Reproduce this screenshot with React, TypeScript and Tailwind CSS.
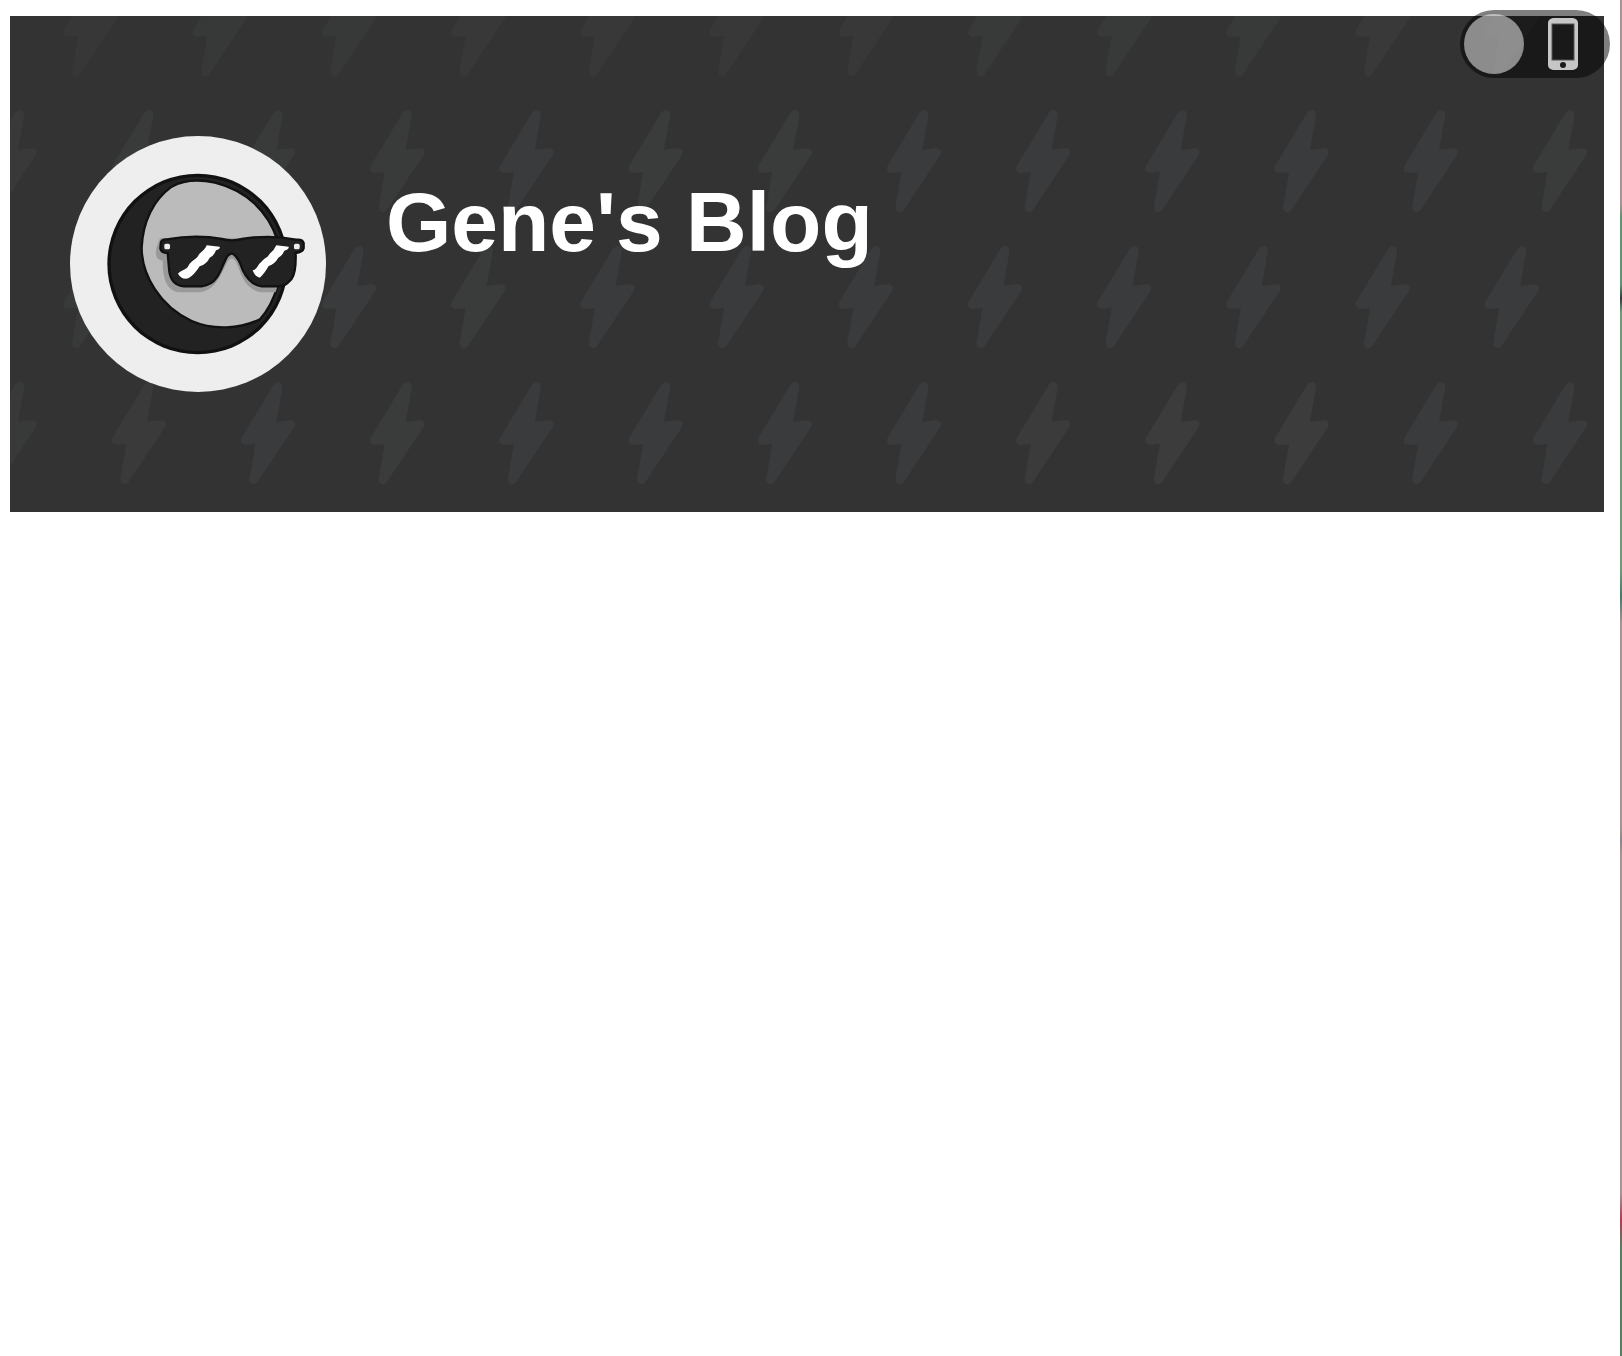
import React from "react";

const boltPath =
  "M33 3 Q35 0 38 0 Q43 1 42 6 L36 40 L50 38 Q57 39 54 45 L18 99 Q16 103 12 102 Q9 101 9 97 L15 62 L5 63 Q-1 62 1 56 Z";

const rows = [
  { y: -42, x: 53 },
  { y: 94, x: -28 },
  { y: 230, x: 53 },
  { y: 366, x: -28 },
];

const rowFills = [
  ["#373737", "#363938", "#363938", "#383838", "#383838", "#383838", "#383838", "#383a39", "#383a39", "#383a3a", "#383938", "#383838"],
  ["#393939", "#383b39", "#383b3a", "#393a3a", "#3a3b3d", "#3a3c3b", "#3a3c3c", "#3a3b3d", "#3a3b3d", "#3a3b3d", "#3a3b3d", "#3a3b3d", "#3a3c3c"],
  ["#373a39", "#393a3b", "#3a3b3d", "#3a3c3b", "#3a3b3d", "#3a3b3d", "#3a3b3d", "#3a3b3d", "#3a3b3d", "#3a3b3d", "#3a3b3d", "#3a3b3d"],
  ["#383a3a", "#3a3a3a", "#3a3b3d", "#3a3c3b", "#3a3b3d", "#3a3b3d", "#3a3b3d", "#3a3b3d", "#3b3b3c", "#3c3c3c", "#3c3c3c", "#3a3b3d", "#3a3b3d"],
];

function BoltPattern() {
  return (
    <svg aria-hidden="true" className="absolute inset-0 h-full w-full">
      {rows.map((row, r) =>
        rowFills[r].map((fill, i) => (
          <path key={`${r}-${i}`} d={boltPath} fill={fill} transform={`translate(${row.x + i * 129.2} ${row.y})`} />
        )),
      )}
    </svg>
  );
}

function MoonLogo() {
  return (
    <svg viewBox="-6 -3 840 840" className="h-[280px] w-[280px] shrink-0" role="img" aria-label="Moon wearing sunglasses">
      <defs>
        <clipPath id="face">
          <path d="M335 185 C375 163 425 164 465 173 C560 197 625 260 652 345 L652 485 C642 520 625 555 600 583 C540 612 460 616 395 588 C300 545 245 450 245 368 C248 290 280 225 335 185 Z" />
        </clipPath>
      </defs>
      <circle cx="413" cy="417" r="271" fill="#111" />
      <circle cx="413" cy="417" r="261" fill="#222" />
      <path
        d="M335 185 C375 163 425 164 465 173 C560 197 625 260 652 345 L652 485 C642 520 625 555 600 583 C540 612 460 616 395 588 C300 545 245 450 245 368 C248 290 280 225 335 185 Z"
        fill="#bbb"
        stroke="#111"
        strokeWidth="7"
      />
      <g clipPath="url(#face)">
        <path
          d="M290 366 Q284 388 292 400 Q300 408 308 406 C308 450 315 495 355 502 H410 C460 500 475 465 495 425 Q512 385 528 410 C545 450 555 495 605 502 H680 V340 H300 Z"
          fill="#999"
        />
      </g>
      <path
        d="M303 351 Q306 342 320 343 C380 332 440 333 486 342 Q516 350 546 342 C600 333 660 334 708 344 Q728 342 731 354 V370 Q728 382 707 384 C708 420 706 448 694 463 C680 479 670 484 650 484 H605 C575 480 560 460 548 435 Q536 398 520 387 Q510 383 501 395 C490 415 483 440 470 458 Q455 480 425 484 H372 C342 482 332 465 328 440 L323 384 Q303 384 301 370 Z"
        fill="#222"
        stroke="#111"
        strokeWidth="7"
      />
      <rect x="313" y="356" width="17" height="17" rx="5" fill="#eee" />
      <rect x="702" y="356" width="17" height="17" rx="5" fill="#eee" />
      <path d="M440 361 L479 365 Q482 372 468 376 Q463 392 449 398 Q441 416 419 424 Q402 451 385 460 Q365 465 354 446 C363 435 378 436 385 423 C391 407 413 402 416 389 C425 379 434 376 440 361 Z" fill="#fff" />
      <path d="M649 361 L686 365 Q688 373 673 377 Q667 392 655 398 Q645 416 626 423 Q611 449 599 458 Q584 455 578 436 C592 433 594 417 604 411 C612 399 623 399 629 386 Q642 377 649 361 Z" fill="#fff" />
    </svg>
  );
}

function PhoneIcon() {
  return (
    <svg viewBox="0 0 30 52" className="h-[52px] w-[30px]" aria-hidden="true">
      <path
        fillRule="evenodd"
        d="M5 0 H25 Q30 1 30 5 V47 Q30 51 25 52 H5 Q0 51 0 47 V5 Q0 1 5 0 Z M4 6 V42 H26 V6 Z M15 44 A3 3 0 1 0 15 50 A3 3 0 1 0 15 44 Z"
        fill="#c6c6c6"
      />
      <rect x="4" y="6" width="22" height="36" fill="none" stroke="#555" strokeWidth="1" />
    </svg>
  );
}

export default function App() {
  return (
    <div className="flex min-h-screen bg-white font-['Liberation_Sans',sans-serif]">
      <main className="min-w-0 flex-1 pt-4 pr-4 pl-2.5">
        <header className="relative flex items-start gap-[60px] overflow-hidden bg-[#333] px-[60px] py-[120px]">
          <BoltPattern />
          <div className="relative flex h-64 w-64 shrink-0 items-center justify-center overflow-hidden rounded-full bg-[#eee]">
            <MoonLogo />
          </div>
          <h1 className="relative pt-[38px] text-[84px] leading-[96px] font-bold whitespace-nowrap text-white">Gene's Blog</h1>
        </header>
      </main>
      <div
        aria-hidden="true"
        className="w-0.5 bg-[linear-gradient(#a89490_0_15%,#5f9470_16%_21%,#303c38_22%,#6f9b79_23%_42%,#477b69_44%,#a69590_46%_61%,#8b8586_62%,#a69590_63%_88%,#a83e50_90%,#55805f_92%_100%)]"
      />
      <button
        type="button"
        role="switch"
        aria-checked="false"
        aria-label="Mobile view"
        className="absolute top-2.5 right-3 flex h-[68px] w-[150px] items-center justify-between rounded-full bg-black/50 pr-8 pl-1"
      >
        <span className="h-[60px] w-[60px] rounded-full bg-white/50" />
        <PhoneIcon />
      </button>
    </div>
  );
}
